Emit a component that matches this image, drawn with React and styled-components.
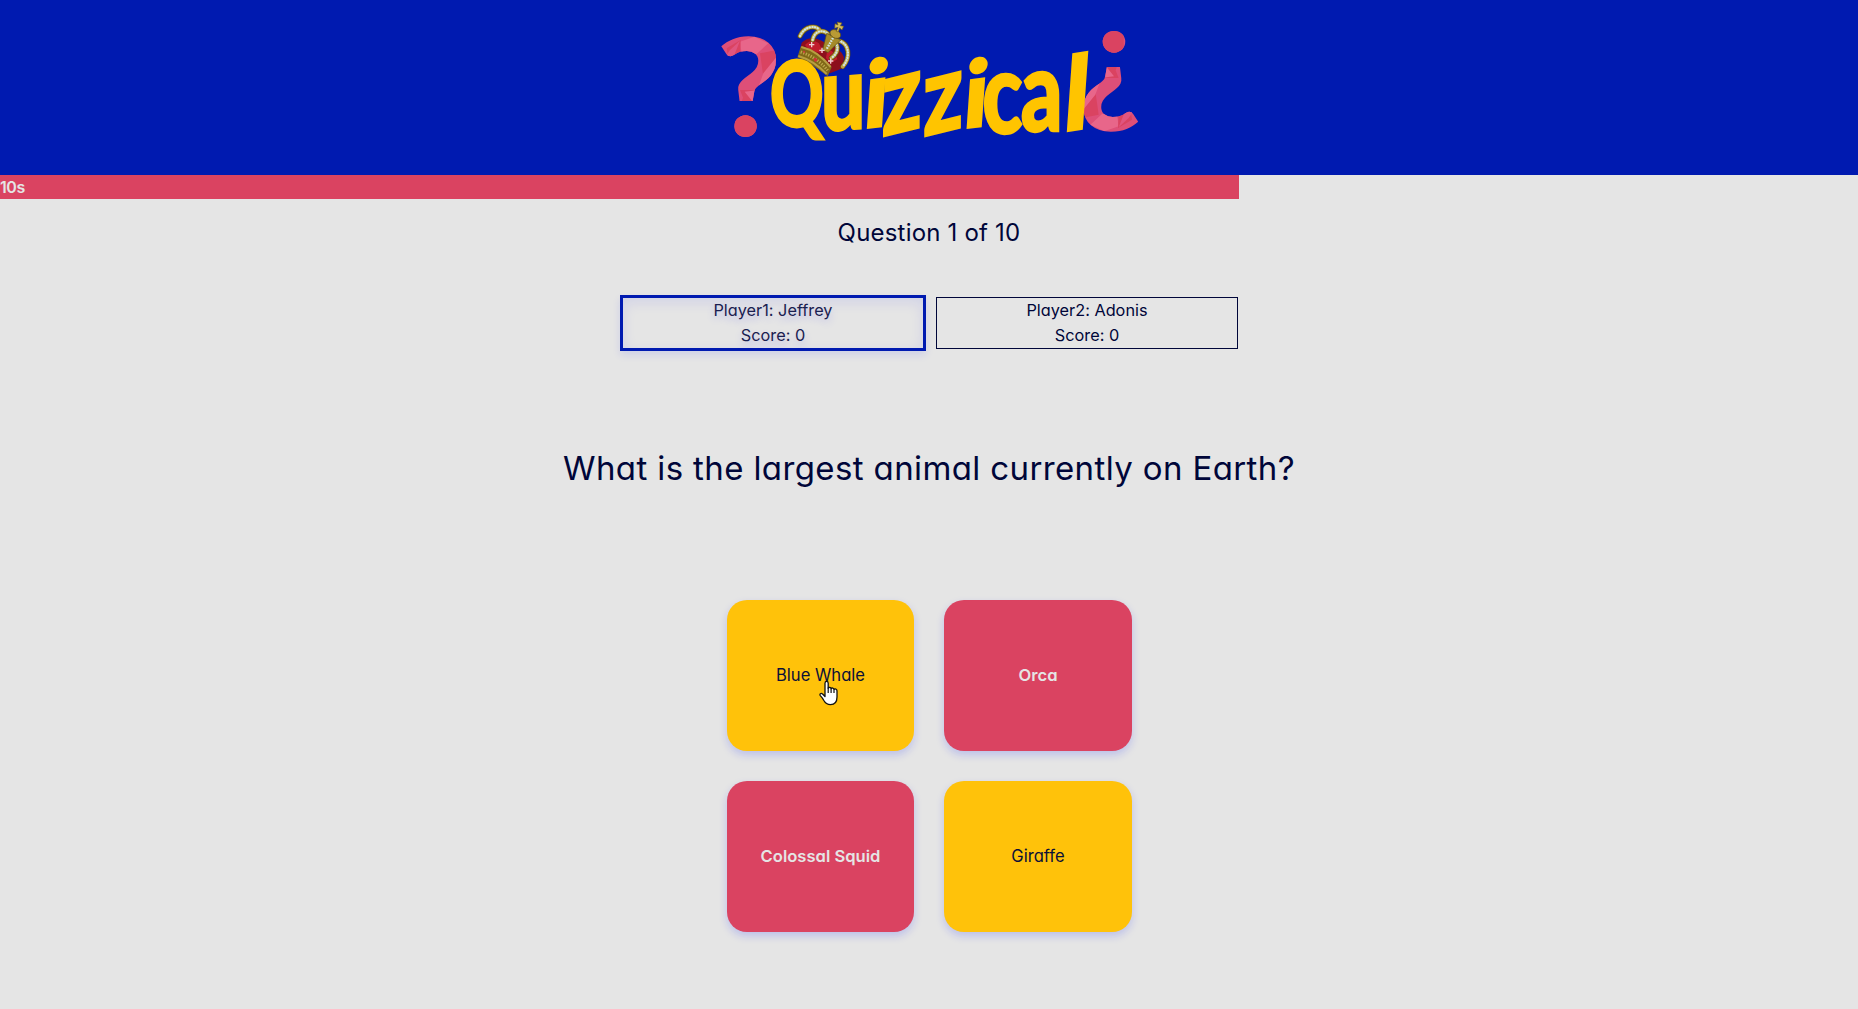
import React from 'react';
import styled, { createGlobalStyle, css } from 'styled-components';

const colors = {
  blue: '#001ab0',
  navy: '#000639',
  pink: '#da4361',
  yellow: '#ffc20a',
  grey: '#e5e5e5',
};

const GlobalStyle = createGlobalStyle`
  * { box-sizing: border-box; }
  body {
    margin: 0;
    background: ${colors.grey};
    color: ${colors.navy};
    font-family: Inter, "Open Sans", sans-serif;
    font-feature-settings: "cv11" 1, "calt" 0;
    font-size: 16px;
    line-height: 25px;
  }
`;

const Page = styled.div`
  display: flex;
  flex-direction: column;
  align-items: center;
  height: 1009px;
  overflow: hidden;
`;

const Header = styled.header`
  display: flex;
  justify-content: center;
  align-self: stretch;
  height: 175px;
  padding-top: 10px;
  background: ${colors.blue};
`;

const LogoSvg = styled.svg`
  width: 440px;
  height: 140px;
  overflow: visible;
`;

const Letter = styled.text`
  font-family: Lato, sans-serif;
  font-weight: 900;
  font-size: 100px;
  fill: ${(p) => p.$fill || '#ffc400'};
  stroke: ${(p) => p.$fill || '#ffc400'};
  stroke-width: ${(p) => p.$weight ?? 2}px;
`;

const Timer = styled.div`
  align-self: flex-start;
  width: 66.67%;
  height: 24px;
  line-height: 25px;
  font-weight: 600;
  letter-spacing: -0.4px;
  color: ${colors.grey};
  background: ${colors.pink};
`;

const Progress = styled.p`
  margin: 16px 0 0;
  font-size: 24px;
  line-height: 36px;
  letter-spacing: 0.2px;
`;

const Players = styled.div`
  display: flex;
  align-items: center;
  gap: 10px;
  height: 56px;
  margin-top: 44px;
`;

const Player = styled.div`
  display: flex;
  flex-direction: column;
  align-items: center;
  box-sizing: content-box;
  width: 300px;
  height: 50px;
  font-size: 16.3px;
  border: 1px solid ${colors.navy};
  ${(p) => p.$active && css`
    border: 3px solid ${colors.blue};
    color: #1a2050;
    text-shadow: 0 4px 8px rgba(0, 26, 255, 0.2);
    box-shadow: 0 4px 8px rgba(0, 26, 255, 0.1), inset 0 4px 14px rgba(0, 26, 255, 0.09);
  `}
`;

const Question = styled.h1`
  margin: 93px 0 0;
  font-size: 33px;
  line-height: 48px;
  font-weight: 430;
  letter-spacing: 0.38px;
`;

const Answers = styled.div`
  display: grid;
  grid-template-columns: 187px 188px;
  grid-auto-rows: 151px;
  gap: 30px;
  width: 405px;
  margin: 108px 0 0 1px;
`;

const Answer = styled.button`
  position: relative;
  display: flex;
  align-items: center;
  justify-content: center;
  padding: 0 0 1px;
  border: 0;
  border-radius: 20px;
  font: inherit;
  font-size: 16.6px;
  font-feature-settings: inherit;
  font-weight: ${(p) => (p.$pink ? 600 : 400)};
  color: ${(p) => (p.$pink ? colors.grey : '#0b1038')};
  background: ${(p) => (p.$pink ? colors.pink : colors.yellow)};
  box-shadow: 0 4px 8px rgba(0, 26, 255, 0.18);
`;

const Pointer = styled.svg`
  position: absolute;
  left: 92px;
  top: 80px;
  width: 20px;
  height: 27px;
`;

const letters = [
  ['Q', 'translate(179 350) scale(2.0 2.74)'],
  ['u', 'translate(333 364) skewY(-4) scale(2.35 3.1)'],
  ['i', 'translate(456 356) skewX(-4) skewY(-7) scale(2.85 2.8)'],
  ['z', 'translate(515 380) skewY(-14) scale(2.6 3.25)'],
  ['z', 'translate(639 380) skewY(-14) scale(2.6 3.25)'],
  ['i', 'translate(755 356) skewX(-4) skewY(-7) scale(2.85 2.8)'],
  ['c', 'translate(817 368) scale(2.5 3.4)'],
  ['a', 'translate(932 364) scale(2.45 3.4)'],
  ['l', 'translate(1056 366) skewX(-4) skewY(-9) scale(3 3.1)'],
];

const MARK = 'translate(20 379) scale(4.15 4.05)';
const FLIPPED = 'translate(1298 65) rotate(180) scale(4.15 4.05)';

function Facets() {
  return (
    <g>
      <path fill="#da4361" d="M150 130L200 120L200 190L160 200ZM90 240L150 240L110 290ZM90 290L105 245L140 320L90 330Z" />
      <path fill="#e8668a" d="M90 95L133 80L175 100L140 132H95ZM160 190L200 140L195 205L140 245ZM104 245L145 240L140 290Z" />
      <path fill="#da4361" d="M50 115L92 90L90 132L60 190ZM75 322H150V390H75Z" />
      <path fill="#e0557f" d="M25 170L60 120L90 92L65 155Z" />
    </g>
  );
}

function Crown() {
  return (
    <g>
      <path fill="#8c0f1c" d="M268 130L275 98Q300 75 335 92L352 103Q390 112 402 142L398 175L360 190Z" />
      <path fill="#c01d2b" d="M285 105Q305 84 327 100L340 130L300 122ZM352 118Q378 125 382 148L362 160L348 144Z" />
      <g fill="none" strokeLinecap="round">
        <path stroke="#5b4b15" strokeWidth="15" d="M270 78C285 47 315 46 327 58M308 90C314 60 340 58 354 72M386 92C418 100 423 142 398 170M380 104C387 119 376 137 364 144" />
        <path stroke="#c0a748" strokeWidth="11" d="M270 78C285 47 315 46 327 58M308 90C314 60 340 58 354 72M386 92C418 100 423 142 398 170M380 104C387 119 376 137 364 144" />
        <path stroke="#cfe4e2" strokeWidth="6.5" strokeDasharray="1 7" d="M270 78C285 47 315 46 327 58M308 90C314 60 340 58 354 72M386 92C418 100 423 142 398 170M380 104C387 119 376 137 364 144" />
      </g>
      <path fill="#a58b2a" stroke="#5b4b15" strokeWidth="2" d="M350 70L392 90L354 128L338 119Z" />
      <path stroke="#cfe4e2" strokeWidth="7" strokeDasharray="5 3" d="M369 84L349 119" />
      <ellipse cx="376" cy="72" rx="17" ry="12" transform="rotate(27 376 72)" fill="#b99b35" stroke="#5b4b15" strokeWidth="2" />
      <path fill="#d4bd59" stroke="#6b5718" strokeWidth="2" d="M379 64L384 52L374 55L375 41L384 45L381 36L396 39L391 47L401 49L396 60L389 54L385 66Z" />
      <path fill="#806817" d="M262 142L273 108Q321 118 365 172L353 199Q305 161 262 142Z" />
      <path fill="none" stroke="#b79e42" strokeWidth="6" d="M274 111Q322 122 362 171M265 138Q310 151 350 192" />
      <path fill="none" stroke="#bda64d" strokeWidth="9" strokeDasharray="4 4" d="M272 126Q320 141 353 181" />
      <path fill="#d0303b" d="M310 146L318 143L323 151L315 156ZM279 122L286 124L282 131Z" />
      <path stroke="#f0cfd0" strokeWidth="4" d="M297 104H313M305 96V112M328 121H344M336 113V129M354 153H370M362 145V161" />
    </g>
  );
}

function Logo() {
  return (
    <LogoSvg viewBox="-3 0 1320 420" role="img" aria-label="Quizzical">
      <defs>
        <clipPath id="mark-left">
          <Letter transform={MARK}>?</Letter>
        </clipPath>
        <clipPath id="mark-right">
          <Letter transform={FLIPPED}>?</Letter>
        </clipPath>
      </defs>
      <Letter $fill="#de4f78" $weight={0} transform={MARK}>?</Letter>
      <g clipPath="url(#mark-left)"><Facets /></g>
      <Letter $fill="#de4f78" $weight={0} transform={FLIPPED}>?</Letter>
      <g clipPath="url(#mark-right)">
        <g transform="translate(1316 444) rotate(180)"><Facets /></g>
      </g>
      <Crown />
      {letters.map(([char, transform], i) => (
        <Letter key={i} transform={transform}>{char}</Letter>
      ))}
    </LogoSvg>
  );
}

function HandPointer() {
  return (
    <Pointer viewBox="0 0 20 27">
      <path
        fill="#fff"
        stroke="#111"
        strokeWidth="1.3"
        strokeLinejoin="round"
        d="M6 16.5V3.2C6 .8 9.2.8 9.2 3.2V8.2C9.8 6.9 12 7.1 12.1 8.6C12.8 7.6 14.9 7.8 15 9.4C16 8.5 18 9 18 10.8V17C18 21.5 15.7 24.6 11.5 24.6C8 24.6 6.2 23 4.7 20.2C3.8 18.4 2.9 17.3 1.3 15.6C.1 13.9 2 12.8 3.6 14Z"
      />
      <path fill="none" stroke="#111" strokeWidth="1.2" d="M9.2 7.5V13M12.1 8.6V13M15 9.4V13" />
    </Pointer>
  );
}

export default function App() {
  return (
    <Page>
      <GlobalStyle />
      <Header><Logo /></Header>
      <Timer>10s</Timer>
      <Progress>Question 1 of 10</Progress>
      <Players>
        <Player $active>
          <span>Player1: Jeffrey</span>
          <span>Score: 0</span>
        </Player>
        <Player>
          <span>Player2: Adonis</span>
          <span>Score: 0</span>
        </Player>
      </Players>
      <Question>What is the largest animal currently on Earth?</Question>
      <Answers>
        <Answer>Blue Whale<HandPointer /></Answer>
        <Answer $pink>Orca</Answer>
        <Answer $pink>Colossal Squid</Answer>
        <Answer>Giraffe</Answer>
      </Answers>
    </Page>
  );
}
